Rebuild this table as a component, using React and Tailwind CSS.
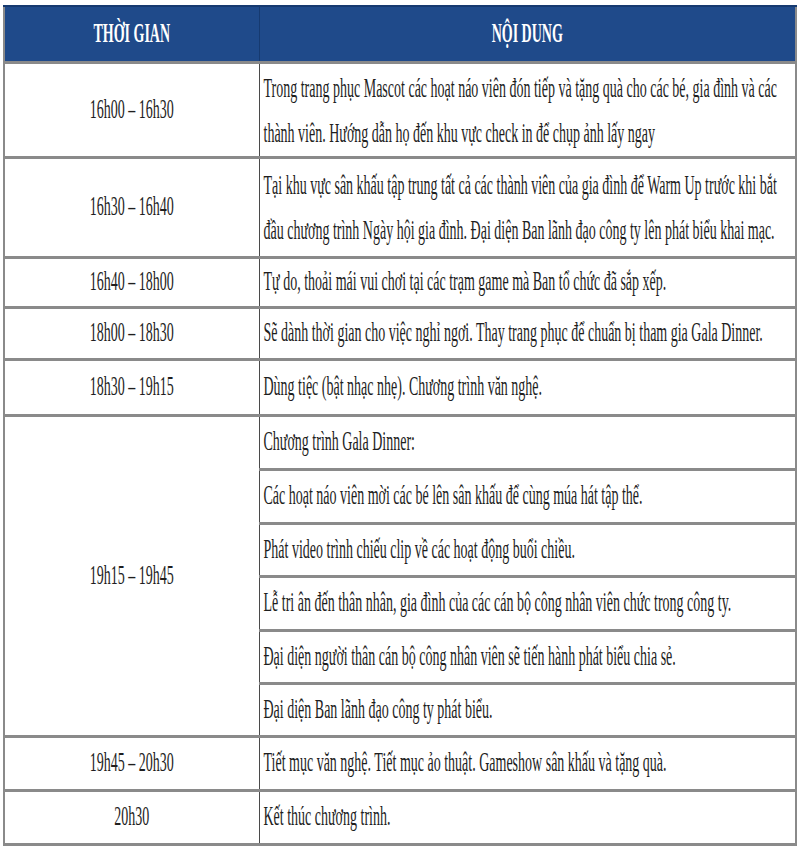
import React from 'react';

const Line = ({ children, h = 45, bold = false }) => (
  <div style={{ height: h, lineHeight: `${h}px` }}>
    <span className={`inline-block scale-y-[2] whitespace-nowrap ${bold ? 'font-bold' : ''}`}>{children}</span>
  </div>
);

const rowsTop = [
  {
    time: '16h00 – 16h30',
    h: 95,
    lines: [
      'Trong trang phục Mascot các hoạt náo viên đón tiếp và tặng quà cho các bé, gia đình và các',
      'thành viên. Hướng dẫn họ đến khu vực check in để chụp ảnh lấy ngay',
    ],
  },
  {
    time: '16h30 – 16h40',
    h: 100,
    lines: [
      'Tại khu vực sân khấu tập trung tất cả các thành viên của gia đình để Warm Up trước khi bắt',
      'đầu chương trình Ngày hội gia đình. Đại diện Ban lãnh đạo công ty lên phát biểu khai mạc.',
    ],
  },
  { time: '16h40 – 18h00', h: 50, lines: ['Tự do, thoải mái vui chơi tại các trạm game mà Ban tổ chức đã sắp xếp.'] },
  { time: '18h00 – 18h30', h: 52, lines: ['Sẽ dành thời gian cho việc nghỉ ngơi. Thay trang phục để chuẩn bị tham gia Gala Dinner.'] },
  { time: '18h30 – 19h15', h: 56, lines: ['Dùng tiệc (bật nhạc nhẹ). Chương trình văn nghệ.'] },
];

const galaItems = [
  { text: 'Chương trình Gala Dinner:', h: 54 },
  { text: 'Các hoạt náo viên mời các bé lên sân khấu để cùng múa hát tập thể.', h: 54 },
  { text: 'Phát video trình chiếu clip về các hoạt động buổi chiều.', h: 53 },
  { text: 'Lễ tri ân đến thân nhân, gia đình của các cán bộ công nhân viên chức trong công ty.', h: 54 },
  { text: 'Đại diện người thân cán bộ công nhân viên sẽ tiến hành phát biểu chia sẻ.', h: 53 },
  { text: 'Đại diện Ban lãnh đạo công ty phát biểu.', h: 53 },
];

const rowsBottom = [
  { time: '19h45 – 20h30', h: 54, lines: ['Tiết mục văn nghệ. Tiết mục ảo thuật. Gameshow sân khấu và tặng quà.'] },
  { time: '20h30', h: 54, lines: ['Kết thúc chương trình.'] },
];

const rowBorder = 'border-t-[3px] border-[#8a8a8a]';

export default function App() {
  return (
    <div className="w-[800px] h-[850px] bg-white pt-[5px] px-[3px] font-['Liberation_Serif',serif] text-[14px] text-[#1e1e1e]">
      <table className="w-[794px] border-collapse table-fixed border-x-2 border-b-[3px] border-[#8a8a8a]">
        <colgroup>
          <col className="w-[255px]" />
          <col />
        </colgroup>
        <thead>
          <tr className="bg-[#1f4a8a] text-white border-t-2 border-[#163a70]">
            <th className="h-[56px] p-0 text-center align-middle border-r border-[#163a70]">
              <Line h={50} bold>THỜI GIAN</Line>
            </th>
            <th className="h-[56px] p-0 text-center align-middle">
              <Line h={50} bold>NỘI DUNG</Line>
            </th>
          </tr>
        </thead>
        <tbody>
          {rowsTop.map((row) => (
            <tr key={row.time} className={rowBorder}>
              <td className="p-0 text-center align-middle border-r border-[#4a4a4a]" style={{ height: row.h }}>
                <Line h={40}>{row.time}</Line>
              </td>
              <td className="p-0 pl-[4px] text-left align-middle">
                {row.lines.map((l) => (
                  <Line key={l} h={row.lines.length > 1 ? 45 : 40}>{l}</Line>
                ))}
              </td>
            </tr>
          ))}
          {galaItems.map((item, i) => (
            <tr key={item.text} className={rowBorder}>
              {i === 0 && (
                <td rowSpan={galaItems.length} className="p-0 text-center align-middle border-r border-[#4a4a4a]">
                  <Line h={40}>19h15 – 19h45</Line>
                </td>
              )}
              <td className="p-0 pl-[4px] text-left align-middle" style={{ height: item.h }}>
                <Line h={40}>{item.text}</Line>
              </td>
            </tr>
          ))}
          {rowsBottom.map((row) => (
            <tr key={row.time} className={rowBorder}>
              <td className="p-0 text-center align-middle border-r border-[#4a4a4a]" style={{ height: row.h }}>
                <Line h={40}>{row.time}</Line>
              </td>
              <td className="p-0 pl-[4px] text-left align-middle">
                {row.lines.map((l) => (
                  <Line key={l} h={40}>{l}</Line>
                ))}
              </td>
            </tr>
          ))}
        </tbody>
      </table>
    </div>
  );
}
